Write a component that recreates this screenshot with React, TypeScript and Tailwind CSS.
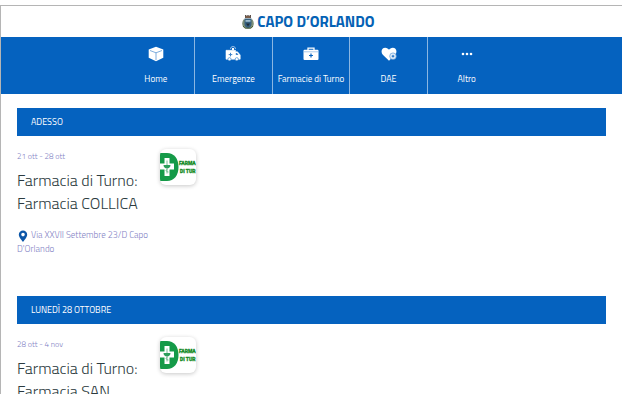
import type { ReactNode } from "react";

function CubeIcon() {
  return (
    <svg viewBox="0 0 16 16" className="size-4" aria-hidden="true">
      <path d="M8 .8 15.300 3.500v8.300L8 15.200.7 11.800V3.500Z" fill="#fff" />
      <path d="M2 4.500 8 6.800 14 4.500M8 6.800V14" fill="none" stroke="#5f9ad6" strokeWidth=".8" />
    </svg>
  );
}

function AmbulanceIcon() {
  return (
    <svg viewBox="0 0 16 16" className="size-4" aria-hidden="true">
      <path d="M5.500 3a2.500 2.500 0 0 1 5 0" fill="none" stroke="#9fc2e6" />
      <path d="M7 2h2v2H7z" fill="#fff" />
      <path d="M1 4.300h9.500v1.500h2L15.200 9v4.200H1Z" fill="#fff" stroke="#fff" strokeWidth=".6" strokeLinejoin="round" />
      <path d="M10.800 7h1.200l1.500 2h-2.700Z" fill="#3d83cc" />
      <path d="M5.500 6.800v3.600M3.700 8.600h3.600" stroke="#3d83cc" strokeWidth="1" />
      <circle cx="4.500" cy="13.200" r="1.600" fill="#fff" stroke="#0562bf" strokeWidth=".5" />
      <circle cx="11.800" cy="13.200" r="1.600" fill="#fff" stroke="#0562bf" strokeWidth=".5" />
    </svg>
  );
}

function CaseIcon() {
  return (
    <svg viewBox="0 0 16 16" className="size-4" aria-hidden="true">
      <path d="M5 4V2.200h6V4" fill="none" stroke="#fff" strokeWidth="1.300" />
      <rect x=".5" y="3.700" width="15" height="10.300" rx="1" fill="#fff" />
      <path d="M1 5.800h14" stroke="#6fa4da" strokeWidth=".6" />
      <path d="M8 7.500v4M6 9.500h4" stroke="#0562bf" strokeWidth="1.200" />
    </svg>
  );
}

function HeartIcon() {
  return (
    <svg viewBox="0 0 16 16" className="size-4" aria-hidden="true">
      <path d="M8 14.800 1.800 8.800C-.8 5.500 1 1.700 4.200 1.700 6 1.700 7.300 2.700 8 3.800c.7-1.100 2-2.100 3.800-2.100C15 1.700 16.800 5.500 14.200 8.800Z" fill="#fff" />
      <circle cx="12" cy="10.200" r="3.300" fill="#e3edf8" stroke="#4a8dd0" strokeWidth=".6" />
      <path d="M12 8.900v2.600M10.700 10.200h2.600" stroke="#0562bf" strokeWidth=".9" />
    </svg>
  );
}

function DotsIcon() {
  return (
    <svg viewBox="0 0 16 16" className="size-4" aria-hidden="true" fill="#fff">
      <circle cx="4" cy="8" r="1.300" />
      <circle cx="8" cy="8" r="1.300" />
      <circle cx="12" cy="8" r="1.300" />
    </svg>
  );
}

function Crest() {
  return (
    <svg viewBox="0 0 12 16" className="h-4 w-3" aria-hidden="true">
      <path d="M1.500 5.500C-.5 8.500-.3 12.500 3 14.500h6c3.300-2 3.500-6 1.500-9Z" fill="#7d8f78" />
      <path d="M3 4V1h1.400v1h.9V1h1.400v1h.9V1H9v3Z" fill="#5a4f4b" />
      <path d="M3.500 3h5" stroke="#a9744a" strokeWidth=".8" />
      <path d="M2.500 4.500h7V10c0 2.500-1.500 3.500-3.500 4.500C4 13.500 2.500 12.500 2.500 10Z" fill="#37617f" />
      <path d="M3.500 6h5v1.800h-5Z" fill="#9dbccd" />
      <path d="M4 9.500h4l-2 3Z" fill="#1f2d38" />
      <path d="M1 12c2 2.500 3 2.500 5 2 2 .5 3 .5 5-2" fill="none" stroke="#4c5f38" />
    </svg>
  );
}

function Pin() {
  return (
    <svg viewBox="0 0 10 12" className="mr-[3px] ml-px inline-block h-3 w-2.5 align-middle" aria-hidden="true">
      <path fillRule="evenodd" d="M5 .5a4.200 4.200 0 0 0-4.200 4.200C.8 7.500 5 11.800 5 11.800s4.200-4.300 4.200-7.100A4.200 4.200 0 0 0 5 .5Zm0 2.300a1.800 1.800 0 1 1 0 3.600 1.800 1.800 0 0 1 0-3.600Z" fill="#0b56a8" />
    </svg>
  );
}

function PharmacyLogo() {
  return (
    <svg viewBox="0 0 36 36" className="size-9 shrink-0 rounded-md bg-white shadow-[0_1px_4px_rgba(0,0,0,0.22)]" role="img" aria-label="Farmacia di Turno">
      <path d="M0 4h7c7 0 11.500 5.500 11.500 14S14 32 7 32H0Z" fill="#159a48" />
      <path d="M4.500 9h5v5.500H14v6H9.500V27h-5v-6.500H0v-6h4.500Z" fill="#fff" />
      <path d="M7 11.500v13" stroke="#57b07c" strokeWidth=".8" />
      <path d="M3.500 16h7c0 2.500-1.500 3.300-3.500 3.300S3.500 18.500 3.500 16Z" fill="#2c9f5c" />
      <path d="M8.500 23c-3-.5-3-2-1-3" fill="none" stroke="#57b07c" strokeWidth=".8" />
      <g fill="#178c28" stroke="#178c28" strokeWidth=".3" fontFamily="Roboto, sans-serif" fontWeight="900" fontSize="5">
        <text x="19" y="16">FARMA</text>
        <text x="20" y="24">DI TUR</text>
      </g>
    </svg>
  );
}

const navItems: { label: string; icon: ReactNode }[] = [
  { label: "Home", icon: <CubeIcon /> },
  { label: "Emergenze", icon: <AmbulanceIcon /> },
  { label: "Farmacie di Turno", icon: <CaseIcon /> },
  { label: "DAE", icon: <HeartIcon /> },
  { label: "Altro", icon: <DotsIcon /> },
];

const shifts = [
  { heading: "ADESSO", dates: "21 ott - 28 ott", name: "Farmacia COLLICA", address: "Via XXVII Settembre 23/D Capo D'Orlando" },
  { heading: "LUNEDÌ 28 OTTOBRE", dates: "28 ott - 4 nov", name: "Farmacia SAN", address: "" },
];

export default function App() {
  return (
    <div className="flex h-screen flex-col bg-white pt-[5px] pb-[6px] font-['Titillium_Web',Roboto,sans-serif]">
      <div className="min-h-0 flex-1 overflow-hidden border-t border-l border-[#b5b5b5]">
        <header>
          <div className="flex h-[31px] items-center justify-center gap-[3px] pr-1.5">
            <Crest />
            <h1 className="text-[15px] leading-4 font-bold text-[#0562b5]">CAPO D’ORLANDO</h1>
          </div>
          <nav className="flex h-[57px] justify-center bg-[#0562bf]">
            <ul className="grid w-[388px] grid-cols-5">
              {navItems.map((item) => (
                <li key={item.label} className="border-r border-[#8bb6e2] last:border-r-0">
                  <a href="#" className="flex h-full flex-col items-center gap-3 pt-[9px] text-[9px] leading-[10px] whitespace-nowrap text-white">
                    {item.icon}
                    <span>{item.label}</span>
                  </a>
                </li>
              ))}
            </ul>
          </nav>
        </header>
        <main className="flex flex-col gap-10 pt-[14px] pr-4 pl-4">
          {shifts.map((shift) => (
            <section key={shift.heading}>
              <h2 className="bg-[#0562bf] px-[14px] text-[9px] leading-7 text-white">{shift.heading}</h2>
              <div className="flex gap-2 pt-[13px]">
                <div className="w-[135px]">
                  <p className="text-[8px] leading-[14px] font-light text-[#8181c4]">{shift.dates}</p>
                  <h3 className="pt-[6px] text-[16px] leading-[23px] font-light text-[#2c3b40]">
                    Farmacia di Turno:
                    <br />
                    {shift.name}
                  </h3>
                  {shift.address && (
                    <p className="pt-[13px] text-[9px] leading-[14px] font-light text-[#8181c4]">
                      <Pin />
                      {shift.address}
                    </p>
                  )}
                </div>
                <PharmacyLogo />
              </div>
            </section>
          ))}
        </main>
      </div>
    </div>
  );
}
